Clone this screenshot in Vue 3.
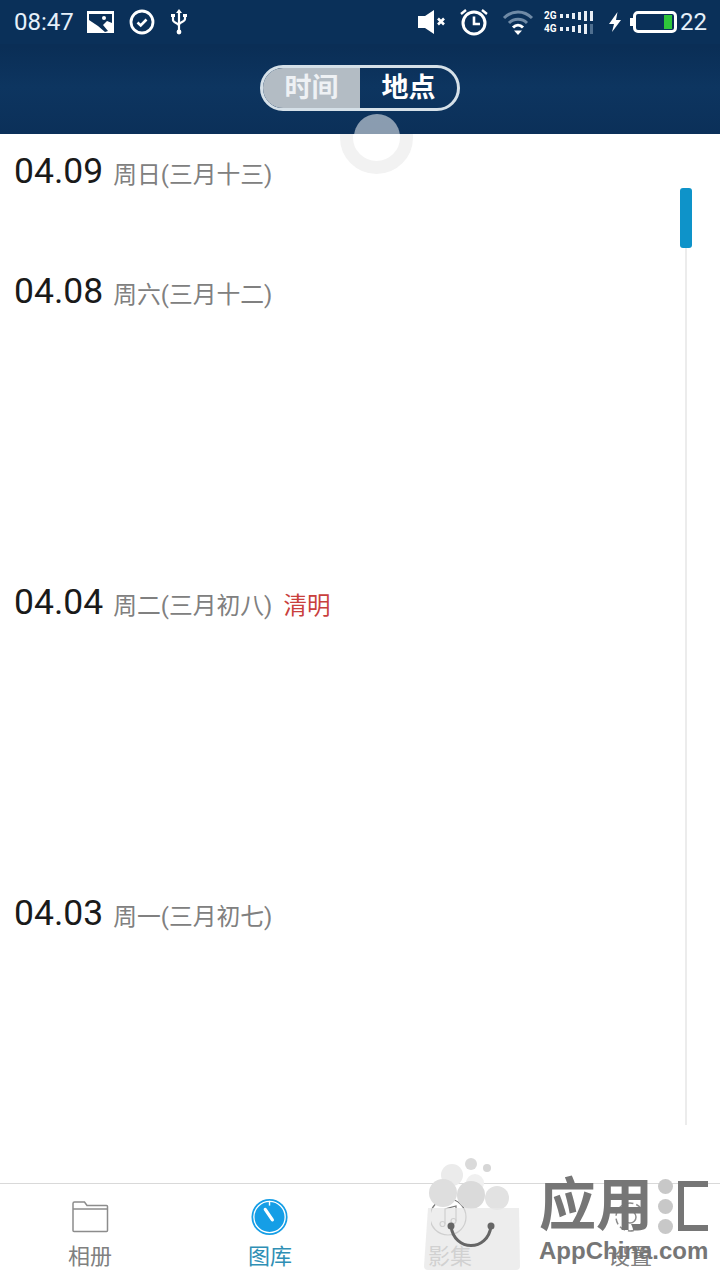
<script setup>
const days = [
  { date: '04.09', info: '周日(三月十三)', height: 120 },
  { date: '04.08', info: '周六(三月十二)', height: 311 },
  { date: '04.04', info: '周二(三月初八)', holiday: '清明', height: 311 },
  { date: '04.03', info: '周一(三月初七)', height: 271 }
]
</script>

<template>
  <div class="page">
    <header class="header">
      <div class="status-bar">
        <div class="status-left">
          <span class="clock">08:47</span>
          <svg class="ic" width="28" height="22" viewBox="0 0 28 22">
            <rect x="1" y="0" width="27" height="22" fill="#fff" />
            <path d="M3 3h23v9l-5-2-4 4 5 6-3 1-7-6-9-6z" fill="#0a2f57" />
            <circle cx="18" cy="7" r="2" fill="#fff" />
          </svg>
          <svg class="ic" width="26" height="26" viewBox="0 0 26 26" fill="none" stroke="#fff">
            <circle cx="13" cy="13" r="11" stroke-width="2.8" />
            <path d="M8.5 13.500l3.200 3 5.800-6" stroke-width="2.600" />
          </svg>
          <svg class="ic" width="18" height="26" viewBox="0 0 18 26" fill="none" stroke="#fff" stroke-width="2.200">
            <path d="M9 3v21M3 7v4c0 3 6 3 6 6M15 7v3c0 3-6 3-6 6" />
            <path d="M9 0l3 4H6z" fill="#fff" stroke="none" />
            <circle cx="9" cy="23" r="2.400" fill="#fff" stroke="none" />
            <rect x="1" y="5" width="4" height="3" fill="#fff" stroke="none" />
            <rect x="13" y="5" width="4" height="3" fill="#fff" stroke="none" />
          </svg>
        </div>
        <div class="status-right">
          <svg class="mute" width="30" height="24" viewBox="0 0 30 24">
            <path d="M1 6h7l9-6v24l-9-6H1z" fill="#fff" />
            <path d="M21 8.500l6 6M27 8.500l-6 6" stroke="#fff" stroke-width="2.600" />
          </svg>
          <svg class="alarm" width="30" height="30" viewBox="0 0 30 30" fill="none" stroke="#fff">
            <circle cx="15" cy="16" r="11" stroke-width="3" />
            <path d="M15 9.500V17h6" stroke-width="2.600" />
            <path d="M2 7l5-4M28 7l-5-4" stroke-width="2.400" />
          </svg>
          <svg class="wifi" width="32" height="26" viewBox="0 0 32 26" fill="none" stroke-width="3">
            <path d="M2 9c8-8 20-8 28 0" stroke="#6f8aa6" />
            <path d="M7 14c5-5 13-5 18 0" stroke="#6f8aa6" />
            <path d="M11 18.500c3-3 7-3 10 0" stroke="#fff" />
            <path d="M16 26l-4-4.500h8z" fill="#fff" />
          </svg>
          <div class="signal">
            <div class="sig-row">
              <span class="sig-label">2G</span>
              <i class="b1"></i><i class="b1"></i><i class="b2"></i><i class="b3"></i><i class="b4"></i><i class="b4"></i>
            </div>
            <div class="sig-row">
              <span class="sig-label">4G</span>
              <i class="b1"></i><i class="b1"></i><i class="b2"></i><i class="b3"></i><i class="b4"></i><i class="b4 dim"></i>
            </div>
          </div>
          <svg class="bolt" width="14" height="22" viewBox="0 0 14 22">
            <path d="M9.500 1L1 13h5l-2 8 9-12H8z" fill="#fff" />
          </svg>
          <div class="battery">
            <span class="battery-level"></span>
          </div>
          <span class="battery-num">22</span>
        </div>
      </div>
      <div class="nav">
        <div class="toggle">
          <span class="toggle-item on">时间</span>
          <span class="toggle-item">地点</span>
        </div>
      </div>
      <div class="spinner-cap"></div>
    </header>

    <main class="timeline">
      <section
        v-for="day in days"
        :key="day.date"
        class="day"
        :style="{ height: day.height + 'px' }"
      >
        <span class="date">{{ day.date }}</span>
        <span class="info">{{ day.info }}</span>
        <span v-if="day.holiday" class="holiday">{{ day.holiday }}</span>
      </section>
      <div class="spinner-ring"></div>
      <div class="scroll-track"></div>
      <div class="scroll-thumb"></div>
    </main>

    <nav class="tabs">
      <div class="tab">
        <svg width="38" height="38" viewBox="0 0 38 38" fill="none" stroke="#8c8c8c" stroke-width="1.500">
          <path d="M2 32.500V5.500a1.500 1.500 0 0 1 1.500-1.500h10l2.500 3.500h19.500a1 1 0 0 1 1 1v24a1 1 0 0 1-1 1H3a1 1 0 0 1-1-1z" />
          <path d="M2 11h34" />
        </svg>
        <span>相册</span>
      </div>
      <div class="tab active">
        <svg width="40" height="40" viewBox="0 0 40 40" fill="none">
          <circle cx="19.500" cy="20" r="19" fill="#159ee6" />
          <circle cx="19.500" cy="20" r="16.500" stroke="#fff" stroke-width="1.400" />
          <path d="M15 12l7.500 11" stroke="#fff" stroke-width="3.400" stroke-linecap="round" />
          <path d="M19.500 3v5" stroke="#fff" stroke-width="1.500" />
        </svg>
        <span>图库</span>
      </div>
      <div class="tab">
        <svg width="38" height="38" viewBox="0 0 38 38" fill="none" stroke="#777" stroke-width="1.200">
          <circle cx="17" cy="19" r="18" />
          <path d="M14 26V11l11-3v15" />
          <circle cx="11.500" cy="26" r="2.500" />
          <circle cx="22.500" cy="23" r="2.500" />
        </svg>
        <span>影集</span>
      </div>
      <div class="tab">
        <svg width="38" height="38" viewBox="0 0 38 38" fill="none" stroke="#8c8c8c" stroke-width="1.500">
          <circle cx="19" cy="19" r="6" />
          <circle cx="19" cy="19" r="14" stroke-dasharray="6 3" />
        </svg>
        <span>设置</span>
      </div>
    </nav>

    <!-- appchina watermark sits over the tab bar -->
    <div class="watermark">
      <svg class="wm-bag" width="100" height="114" viewBox="0 0 100 114">
        <circle cx="47" cy="6" r="6" fill="#dadada" />
        <circle cx="63" cy="10" r="4" fill="#d6d6d6" />
        <circle cx="28" cy="17" r="11" fill="#ebebeb" />
        <circle cx="51" cy="25" r="9" fill="#f0f0f0" />
        <circle cx="19" cy="35" r="14" fill="#dedede" />
        <circle cx="47" cy="37" r="14" fill="#dadada" />
        <circle cx="73" cy="40" r="12" fill="#e2e2e2" />
        <path d="M4 50h91l1 58a4 4 0 0 1-4 4H4a4 4 0 0 1-4-4z" fill="#e8e8e8" opacity="0.78" />
        <path d="M27 68c3 26 37 26 40 0" fill="none" stroke="#666" stroke-width="3" />
        <circle cx="27" cy="68" r="3.500" fill="#666" />
        <circle cx="67" cy="68" r="3.500" fill="#666" />
      </svg>
      <div class="wm-text">
        <div class="wm-cn">
          <span>应用</span>
          <span class="wm-dots"><i></i><i></i><i></i></span>
          <svg width="30" height="50" viewBox="0 0 30 50" fill="none" stroke="#767676" stroke-width="6">
            <path d="M30 3H3v44h27" />
          </svg>
        </div>
        <div class="wm-en">AppChina.com</div>
      </div>
    </div>
  </div>
</template>

<style scoped>
.page {
  position: relative;
  display: flex;
  flex-direction: column;
  width: 720px;
  height: 1280px;
  overflow: hidden;
  background: #fff;
  font-family: Roboto, "Noto Sans CJK SC", sans-serif;
}

.header {
  position: relative;
  height: 134px;
  overflow: hidden;
  background: linear-gradient(180deg, #0a2e56 0%, #0a2e56 35%, #0d3560 65%, #0b3059 100%);
  color: #fff;
}

.status-bar {
  display: flex;
  align-items: center;
  justify-content: space-between;
  height: 44px;
  padding: 0 13px 0 14px;
  background: #0a3059;
}

.status-left,
.status-right {
  display: flex;
  align-items: center;
}

.status-left .ic {
  margin-left: 15px;
}

.status-left .ic:first-of-type {
  margin-left: 12px;
}

.clock,
.battery-num {
  font-size: 24px;
  color: #e6f0fa;
}

.mute { margin-right: 12px; }
.alarm { margin-right: 13px; }
.wifi { margin-right: 10px; }
.signal { margin-right: 15px; }
.bolt { margin-right: 11px; }

.signal {
  display: flex;
  flex-direction: column;
  gap: 2px;
}

.sig-row {
  display: flex;
  align-items: center;
  gap: 3px;
  height: 11px;
}

.sig-label {
  width: 13px;
  font-size: 10px;
  font-weight: 700;
  line-height: 11px;
  white-space: nowrap;
}

.sig-row i {
  width: 3px;
  background: #e8eef5;
}

.sig-row .b1 { height: 4px; }
.sig-row .b2 { height: 6px; }
.sig-row .b3 { height: 8px; }
.sig-row .b4 { height: 10px; }
.sig-row .dim { background: #4f6f90; }

.battery {
  position: relative;
  display: flex;
  justify-content: flex-end;
  width: 44px;
  height: 22px;
  margin-right: 3px;
  padding: 1px 2px;
  box-sizing: border-box;
  border: 3px solid #fff;
  border-radius: 5px;
}

.battery::before {
  content: '';
  position: absolute;
  top: 4px;
  left: -6px;
  width: 3px;
  height: 8px;
  background: #fff;
}

.battery-level {
  width: 8px;
  background: #2fc53a;
}

.nav {
  display: flex;
  justify-content: center;
  padding-top: 21px;
}

.toggle {
  display: flex;
  width: 200px;
  height: 46px;
  box-sizing: border-box;
  border: 3px solid #d5e0e8;
  border-radius: 23px;
  overflow: hidden;
}

.toggle-item {
  flex: 1;
  font-size: 27px;
  font-weight: 700;
  line-height: 41px;
  text-align: center;
}

.toggle-item.on {
  background: #b3bcc4;
  color: #eef1f4;
}

.spinner-cap {
  position: absolute;
  top: 114px;
  left: 354px;
  width: 46px;
  height: 46px;
  border-radius: 50%;
  background: rgba(255, 255, 255, 0.52);
}

.timeline {
  position: relative;
  flex: 1;
  overflow: hidden;
}

.spinner-ring {
  position: absolute;
  top: -33px;
  left: 340px;
  width: 73px;
  height: 73px;
  box-sizing: border-box;
  border: 13px solid #f2f2f2;
  border-radius: 50%;
}

.day {
  display: flex;
  align-items: baseline;
  padding: 17px 0 0 14px;
  box-sizing: border-box;
}

.date {
  font-size: 35.5px;
  line-height: 40px;
  color: #1a1a1a;
}

.info {
  margin-left: 10px;
  font-size: 23.8px;
  color: #808080;
}

.holiday {
  margin-left: 11px;
  font-size: 23.5px;
  color: #c9403c;
}

.scroll-track {
  position: absolute;
  top: 114px;
  left: 685px;
  width: 2px;
  height: 877px;
  background: #ececec;
}

.scroll-thumb {
  position: absolute;
  top: 54px;
  left: 680px;
  width: 12px;
  height: 60px;
  border-radius: 3px;
  background: #0e93c9;
}

.tabs {
  display: grid;
  grid-template-columns: repeat(4, 1fr);
  height: 97px;
  box-sizing: border-box;
  border-top: 1px solid #d9d9d9;
}

.tab {
  display: flex;
  flex-direction: column;
  align-items: center;
  padding-top: 14px;
  font-size: 22px;
  color: #808080;
}

.tab svg {
  height: 38px;
}

.tab span {
  margin-top: 6px;
  line-height: 30px;
}

.tab.active {
  color: #2f8fb5;
}

.watermark {
  position: absolute;
  top: 1158px;
  left: 424px;
  display: flex;
  gap: 15px;
}

.wm-bag {
  flex-shrink: 0;
}

.wm-text {
  padding-top: 21px;
  color: #767676;
}

.wm-cn {
  display: flex;
  align-items: center;
  height: 54px;
  font-size: 57px;
  font-weight: 700;
  line-height: 54px;
}

.wm-dots {
  display: flex;
  flex-direction: column;
  gap: 5px;
  margin: 0 5px 0 5px;
}

.wm-dots i {
  width: 15px;
  height: 15px;
  border-radius: 50%;
  background: #c8c8c8;
}

.wm-en {
  margin-top: 5px;
  font-family: "Liberation Sans", sans-serif;
  font-size: 24px;
  font-weight: 700;
  line-height: 26px;
  white-space: nowrap;
}
</style>
